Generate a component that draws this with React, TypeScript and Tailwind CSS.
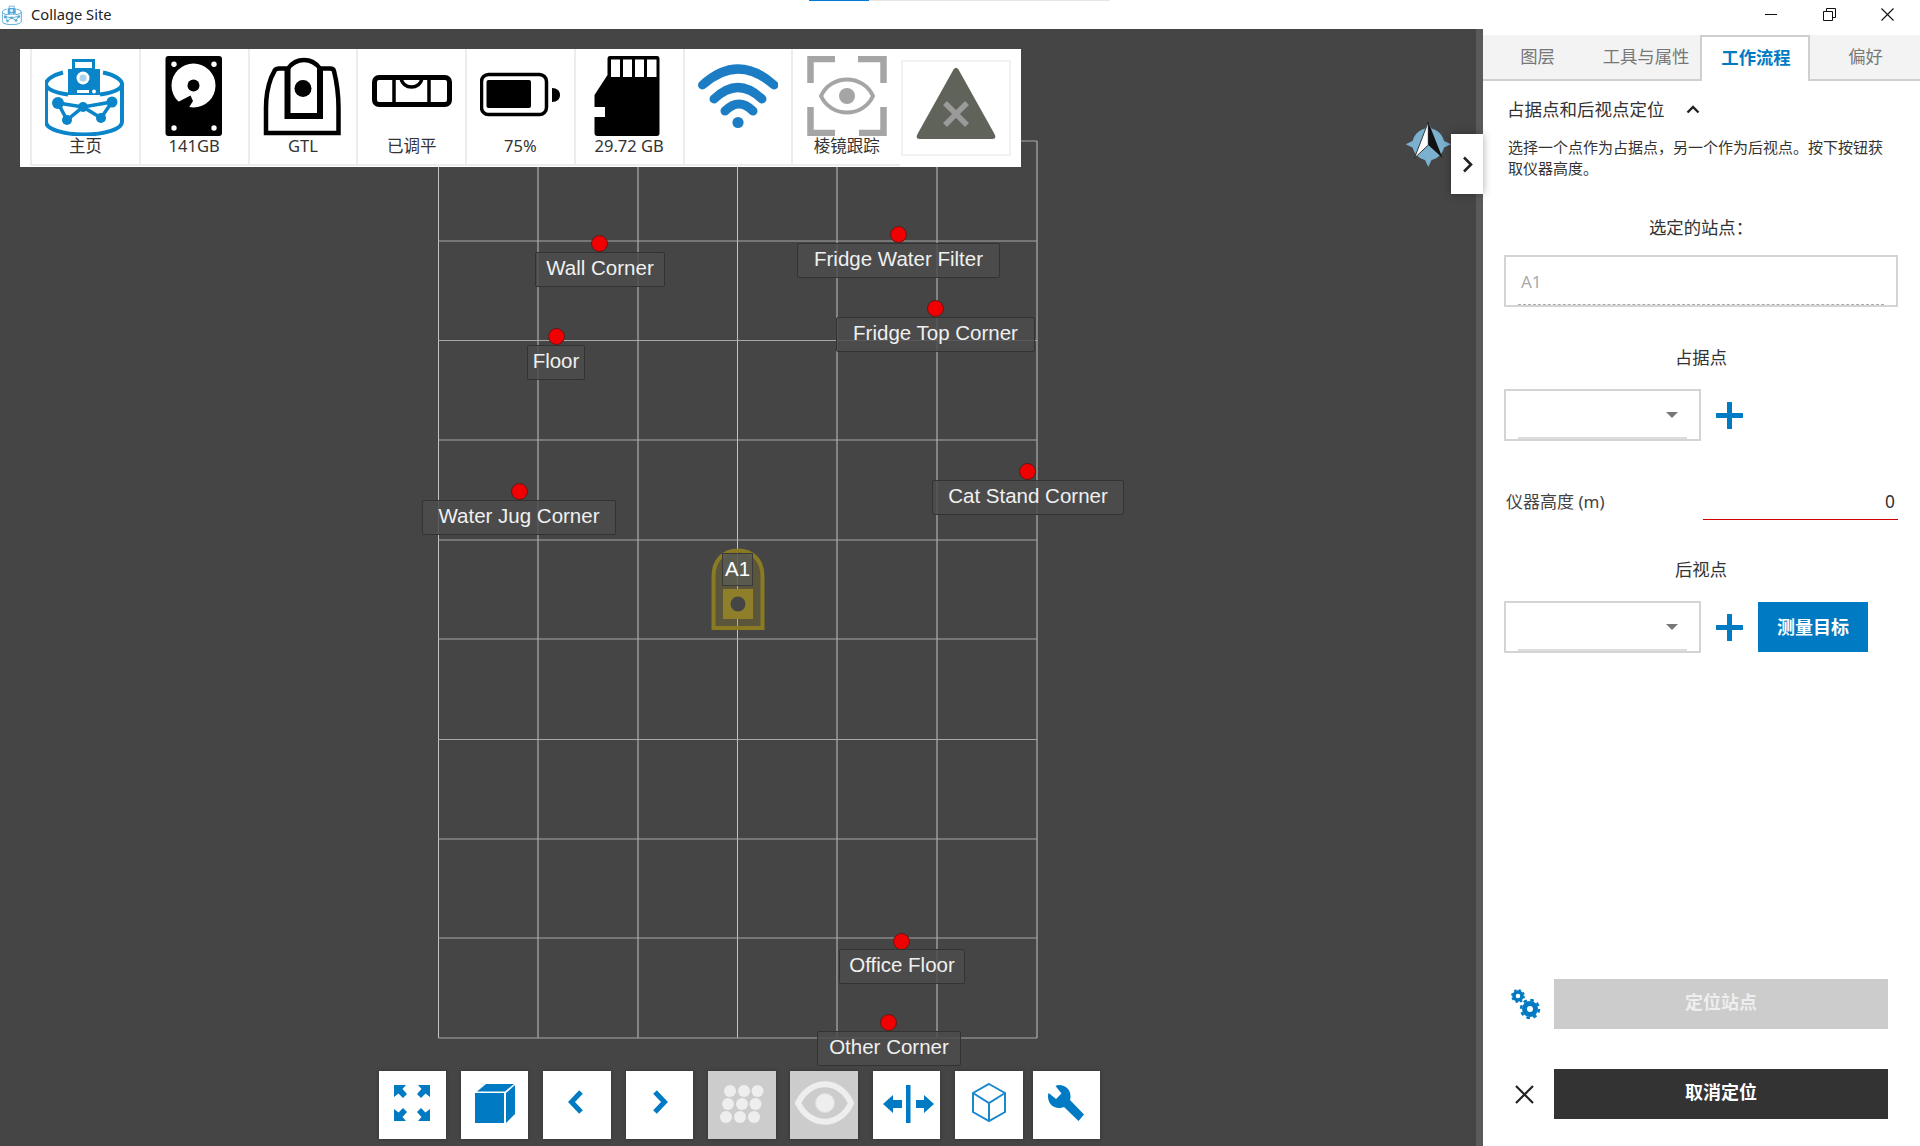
import React from 'react';

const BLUE = '#007ac3';

const gridX = [438.5, 538, 638, 737.5, 837, 937, 1037];
const gridY = [112, 212, 311.5, 411, 511, 610, 710.5, 810, 909, 1009];

const points = [
  { name: 'Wall Corner', dot: [599, 214], box: [535, 223, 130] },
  { name: 'Fridge Water Filter', dot: [898, 205], box: [797, 214, 203] },
  { name: 'Floor', dot: [556, 307], box: [527, 316, 58] },
  { name: 'Fridge Top Corner', dot: [935, 279], box: [836, 288, 199] },
  { name: 'Water Jug Corner', dot: [519, 462], box: [422, 471, 194] },
  { name: 'Cat Stand Corner', dot: [1027, 442], box: [932, 451, 192] },
  { name: 'Office Floor', dot: [901, 912], box: [839, 920, 126] },
  { name: 'Other Corner', dot: [888, 993], box: [817, 1002, 144] },
];

const HomeIcon = ({ size = 80 }: { size?: number }) => (
  <svg width={size} height={size} viewBox="0 0 80 80" fill="none">
    <g stroke="#0a85c9" strokeWidth="4">
      <path d="M1 66V28C1 24 8 19 18 16.5M77 66V28C77 24 70 19 58 16.5" />
      <path d="M1 28C1 33 10 37 23 38.5M77 28C77 33 68 37 55 38.5" />
      <path d="M1 66C1 73 18 78.5 39 78.5S77 73 77 66" />
    </g>
    <path d="M27 3H50V13H55V39H23V13H27Z" fill="#0a85c9" />
    <rect x="30" y="6" width="17" height="6" fill="#fff" />
    <circle cx="38" cy="22" r="6.5" fill="#fff" />
    <circle cx="38" cy="22" r="3.5" fill="#0a85c9" opacity="0.35" />
    <rect x="32" y="34" width="12" height="3" fill="#fff" />
    <circle cx="49" cy="35.5" r="2" fill="#fff" />
    <g stroke="#0a85c9" strokeWidth="3.5">
      <path d="M13 47L38 51L67 46L56 62L38 51L22 64L13 47" />
    </g>
    <g fill="#0a85c9">
      <circle cx="13" cy="47" r="6" />
      <circle cx="38" cy="51" r="5" />
      <circle cx="67" cy="46" r="5.5" />
      <circle cx="22" cy="64" r="5" />
      <circle cx="56" cy="62" r="5" />
    </g>
  </svg>
);

const DiskIcon = () => (
  <svg width="80" height="80" viewBox="0 0 80 80">
    <rect x="11.5" y="0" width="56.5" height="80" rx="3" fill="#000" />
    <g fill="#fff">
      <circle cx="20" cy="8.3" r="2.7" />
      <circle cx="60" cy="8.3" r="2.7" />
      <circle cx="20" cy="72" r="2.7" />
      <circle cx="60" cy="72" r="2.7" />
      <circle cx="39.5" cy="29.5" r="22" />
    </g>
    <circle cx="39.5" cy="29.5" r="6" fill="#000" />
    <path d="M24 46L36.5 39.5L39 45L34 53L27 53Z" fill="#000" />
  </svg>
);

const GtlIcon = () => (
  <svg width="80" height="80" viewBox="0 0 80 80" fill="none" stroke="#000">
    <path
      d="M3 77V52C3 42 5 30 8 22L12 14C13 12.5 14 12.5 16 12.5H25C29 7 34 4 41 4S53 7 57 12.5H67C69 12.5 70.5 13 71 15C74 27 75.5 40 75.5 52V77Z"
      strokeWidth="4.5"
    />
    <path d="M24.5 12V60H57V12" strokeWidth="6" />
    <circle cx="40" cy="32.5" r="8.5" fill="#000" stroke="none" />
  </svg>
);

const LevelIcon = () => (
  <svg width="80" height="80" viewBox="0 0 80 80" fill="none" stroke="#000">
    <rect x="2.5" y="21.5" width="75" height="27" rx="4.5" strokeWidth="5" />
    <path d="M22 20V50M57 20V50" strokeWidth="3.5" />
    <path d="M29 22C31 34 48 34 50 22" strokeWidth="3.5" />
  </svg>
);

const BatteryIcon = () => (
  <svg width="80" height="80" viewBox="0 0 80 80" fill="none">
    <rect x="1.5" y="18.5" width="65" height="40" rx="7" stroke="#000" strokeWidth="3.5" />
    <rect x="6.5" y="24" width="44.5" height="28" rx="2" fill="#000" />
    <path d="M72 32C77 32 80 35 80 39S77 46 72 46Z" fill="#000" />
  </svg>
);

const CardIcon = () => (
  <svg width="80" height="80" viewBox="0 0 80 80">
    <path
      d="M21 0H68Q70.5 0 70.5 3V77Q70.5 80 68 80H8.5Q5.5 80 5.5 77V61H16V51H5.5V39L18.5 19V3Q18.5 0 21 0Z"
      fill="#000"
    />
    <g fill="#fff">
      <rect x="22" y="3.5" width="9" height="17.5" />
      <rect x="34" y="3.5" width="9" height="17.5" />
      <rect x="46" y="3.5" width="9" height="17.5" />
      <rect x="58" y="3.5" width="9.5" height="17.5" />
    </g>
  </svg>
);

const WifiIcon = () => (
  <svg width="80" height="80" viewBox="0 0 80 80" fill="none" stroke="#1c7dc4" strokeLinecap="round">
    <path d="M4.5 29Q40 -3 76 29" strokeWidth="9" />
    <path d="M16 43Q40 20 64 43" strokeWidth="9" />
    <path d="M27 55Q41 41 55 55" strokeWidth="9" />
    <circle cx="40" cy="66.5" r="5.6" fill="#1c7dc4" stroke="none" />
  </svg>
);

const PrismIcon = () => (
  <svg width="80" height="80" viewBox="0 0 80 80" fill="none" stroke="#a5a5a5">
    <path d="M3.5 27V3H28M51 3H76.5V27M3.5 51V77H28M52 77H76.5V51" strokeWidth="6.5" />
    <path d="M14 40C24 18 56 18 66 40C56 62 24 62 14 40Z" strokeWidth="4" />
    <circle cx="40" cy="40" r="8" fill="#a5a5a5" stroke="none" />
  </svg>
);

const WarningIcon = () => (
  <svg width="80" height="74" viewBox="0 0 80 74">
    <path d="M37.5 2.5Q40 -1 42.5 2.5L78.5 67Q81 72 76 72H4Q-1 72 1.5 67Z" fill="#5f635a" />
    <path d="M29 36L51 58M51 36L29 58" stroke="#9a9a9a" strokeWidth="5.5" />
  </svg>
);

const statusItems = [
  { label: '主页', icon: <HomeIcon /> },
  { label: '141GB', icon: <DiskIcon /> },
  { label: 'GTL', icon: <GtlIcon /> },
  { label: '已调平', icon: <LevelIcon /> },
  { label: '75%', icon: <BatteryIcon /> },
  { label: '29.72 GB', icon: <CardIcon /> },
  { label: '', icon: <WifiIcon /> },
  { label: '棱镜跟踪', icon: <PrismIcon /> },
];

const ToolSvg = ({ children }: { children: React.ReactNode }) => (
  <svg width="67" height="68" viewBox="0 0 67 68">
    {children}
  </svg>
);

const bottomTools = [
  {
    cls: 'w-[67px] mr-[15px]',
    icon: (
      <ToolSvg>
        <g fill={BLUE}>
          <path d="M15 14H27L23.5 18L28 23L24 27L19.5 22.5L15 26Z" />
          <path d="M51 14H39L42.5 18L38 23L42 27L46.5 22.5L51 26Z" />
          <path d="M15 50H27L23.5 46L28 41L24 37L19.5 41.5L15 38Z" />
          <path d="M51 50H39L42.5 46L38 41L42 37L46.5 41.5L51 38Z" />
        </g>
      </ToolSvg>
    ),
  },
  {
    cls: 'w-[67px] mr-[15px]',
    icon: (
      <ToolSvg>
        <g fill={BLUE}>
          <rect x="14" y="22" width="29" height="30" />
          <path d="M16 20.5L25 13H53L44 20.5Z" />
          <path d="M45 22L54 14V43L45 52Z" />
        </g>
      </ToolSvg>
    ),
  },
  {
    cls: 'w-[68px] mr-[15px]',
    icon: (
      <ToolSvg>
        <path d="M38 21L28.5 31L38 41" fill="none" stroke={BLUE} strokeWidth="5" />
      </ToolSvg>
    ),
  },
  {
    cls: 'w-[67px] mr-[15px]',
    icon: (
      <ToolSvg>
        <path d="M29 21L38.5 31L29 41" fill="none" stroke={BLUE} strokeWidth="5" />
      </ToolSvg>
    ),
  },
  {
    cls: 'w-[68px] mr-[14px]',
    off: true,
    icon: (
      <ToolSvg>
        <g fill="#eeeeee">
          <circle cx="22" cy="20" r="6" />
          <circle cx="36" cy="20" r="6" />
          <circle cx="49.5" cy="20" r="6" />
          <circle cx="20" cy="33" r="6" />
          <circle cx="34" cy="33" r="6" />
          <circle cx="47.5" cy="33" r="6" />
          <circle cx="18" cy="46" r="6" />
          <circle cx="32" cy="46" r="6" />
          <circle cx="46" cy="46" r="6" />
        </g>
      </ToolSvg>
    ),
  },
  {
    cls: 'w-[68px] mr-[15px]',
    off: true,
    icon: (
      <ToolSvg>
        <path d="M8 32C20 7 50 7 61 32C50 57 20 57 8 32Z" fill="none" stroke="#eeeeee" strokeWidth="6" />
        <circle cx="35" cy="32" r="9.5" fill="#eeeeee" stroke="#dddddd" />
      </ToolSvg>
    ),
  },
  {
    cls: 'w-[67px] mr-[15px]',
    icon: (
      <ToolSvg>
        <g fill={BLUE}>
          <rect x="33" y="14" width="4.5" height="38" />
          <path d="M10 33L20 24V29H29V37H20V42Z" />
          <path d="M61 33L51 24V29H43V37H51V42Z" />
        </g>
      </ToolSvg>
    ),
  },
  {
    cls: 'w-[68px] mr-[10px]',
    icon: (
      <ToolSvg>
        <path
          d="M34 13L50 22V41L34 50L18 41V22ZM18 22L34 32L50 22M34 32V50"
          fill="none"
          stroke="#1a88cc"
          strokeWidth="2"
        />
      </ToolSvg>
    ),
  },
  {
    cls: 'w-[67px]',
    icon: (
      <ToolSvg>
        <path
          d="M26 14C33 14 38 19 37.5 26C37.5 27 37.3 28 37 29L51 43.5L45.5 50L31 36C29 36.8 27.5 37 26 37C19.5 37 15 32 15 25.5C15 24 15.2 23 15.7 22L23 28L28.5 22.5L22.5 15C23.5 14.4 24.7 14 26 14Z"
          fill={BLUE}
        />
      </ToolSvg>
    ),
  },
];

const tabs = ['图层', '工具与属性', '工作流程', '偏好'];

const Dropdown = () => (
  <div className="w-[197px] h-[52px] border-2 border-[#d4d4d4] px-[12px]">
    <div className="h-full border-b-2 border-[#dddddd] flex items-center justify-end pr-[9px] pt-[2px]">
      <div className="w-0 h-0 border-x-[6px] border-x-transparent border-t-[6px] border-t-[#777777]" />
    </div>
  </div>
);

const Plus = () => (
  <svg width="27" height="27" viewBox="0 0 27 27" className="ml-[15px]">
    <path d="M13.5 1V26M1 13.5H26" stroke={BLUE} strokeWidth="5" strokeLinecap="round" />
  </svg>
);

const FieldLabel = ({ className, children }: { className: string; children: React.ReactNode }) => (
  <div className={`h-6 leading-6 text-center text-[17.33px] text-[#333333] ${className}`}>{children}</div>
);

export default function App() {
  return (
    <div className="relative w-[1920px] h-[1146px] overflow-hidden bg-white flex flex-col font-['Noto_Sans','Noto_Sans_CJK_SC',sans-serif]">
      {/* title bar */}
      <div className="h-[29px] shrink-0 flex items-center">
        <div className="ml-[2px] mr-[9px] opacity-70">
          <HomeIcon size={20} />
        </div>
        <span className="text-[14.7px] text-[#222222]">Collage Site</span>
        <div className="ml-auto mr-[3px] flex">
          <div className="w-[58px] h-[29px] flex items-center justify-center">
            <div className="w-[12px] h-px bg-[#111111]" />
          </div>
          <div className="w-[58px] h-[29px] flex items-center justify-center">
            <svg width="13" height="13" viewBox="0 0 13 13" fill="none" stroke="#111111">
              <path d="M.5 3.5H9.5V12.5H.5ZM3.5 3.5V.5H12.5V9.5H9.5" />
            </svg>
          </div>
          <div className="w-[59px] h-[29px] flex items-center justify-center">
            <svg width="13" height="13" viewBox="0 0 13 13" stroke="#111111" strokeWidth="1.1">
              <path d="M.5 .5L12.5 12.5M12.5 .5L.5 12.5" />
            </svg>
          </div>
        </div>
      </div>
      <div className="absolute left-[809px] top-0 w-[60px] h-px bg-[#0078d7]" />
      <div className="absolute left-[869px] top-0 w-[241px] h-px bg-[#e6e6e6]" />

      <div className="flex-1 flex min-h-0">
        {/* map canvas */}
        <div className="relative w-[1483px] bg-[#454545] border-r-[7px] border-[#5a5a5a] flex flex-col">
          <svg className="absolute left-0 top-0" width="1476" height="1117">
            {gridX.map((x) => (
              <line key={x} x1={x} x2={x} y1={gridY[0]} y2={gridY[9]} stroke="#c4c4c4" strokeWidth="1" />
            ))}
            {gridY.map((y) => (
              <line key={y} x1={gridX[0]} x2={gridX[6]} y1={y} y2={y} stroke="#a8a8a8" strokeWidth="1.2" />
            ))}
          </svg>

          {points.map((p) => (
            <React.Fragment key={p.name}>
              <div
                className="absolute w-[17px] h-[17px] rounded-full bg-[#f00000] border border-[#5a1a1a]"
                style={{ left: p.dot[0] - 8.5, top: p.dot[1] - 8.5 }}
              />
              <div
                className="absolute h-[35px] pb-[2px] flex items-center justify-center border border-[#333333] rounded-[2px] bg-[#4c4c4c]/85 text-[20.5px] text-[#f0f0f0] font-['Liberation_Sans',sans-serif]"
                style={{ left: p.box[0], top: p.box[1], width: p.box[2] }}
              >
                {p.name}
              </div>
            </React.Fragment>
          ))}

          {/* station marker */}
          <svg className="absolute left-[711px] top-[519px]" width="54" height="83" viewBox="0 0 54 83" fill="none">
            <path d="M2.5 80V28C2.5 12 13 2.5 27 2.5S51.5 12 51.5 28V80Z" fill="#8a7a24" fillOpacity="0.3" stroke="#8a7a24" strokeWidth="4" />
            <rect x="12" y="41" width="30" height="30" fill="#8f7f2a" />
            <circle cx="27" cy="56" r="7.5" fill="#454545" />
          </svg>
          <div className="absolute left-[722px] top-[524px] w-[31px] h-[33px] flex items-center justify-center border border-[#3a3a3a] bg-[#5c5c54]/85 text-[20.5px] text-white font-['Liberation_Sans',sans-serif]">
            A1
          </div>

          {/* compass */}
          <svg className="absolute left-[1400px] top-[86px]" width="60" height="60" viewBox="0 0 60 60">
            <g fill="#7bb0cf">
              <circle cx="28.3" cy="29.3" r="16" />
              <path d="M28.3 6.7L32 15H24.5Z" />
              <path d="M51 29.3L43 25.5V33Z" />
              <path d="M28.3 52L32 44H24.5Z" />
              <path d="M5.7 29.3L13.5 25.5V33Z" />
            </g>
            <path d="M28.3 7L14.5 43L28.3 30Z" fill="#ffffff" stroke="#111111" strokeWidth="0.8" />
            <path d="M28.3 7L42.5 43L28.3 30Z" fill="#111111" />
          </svg>

          {/* collapse handle */}
          <div className="absolute right-[-7px] top-[105px] w-[32px] h-[60px] bg-white shadow-[0_0_8px_rgba(0,0,0,0.35)] flex items-center justify-center">
            <svg width="11" height="17" viewBox="0 0 11 17" fill="none" stroke="#222222" strokeWidth="2.6">
              <path d="M2 1.5L9 8.5L2 15.5" />
            </svg>
          </div>

          {/* status strip */}
          <div className="relative ml-[20px] mt-[20px] w-[1001px] h-[118px] bg-white pl-[10px] flex items-start">
            {statusItems.map((item, i) => (
              <div
                key={i}
                className="w-[108.75px] h-[117px] border-l-2 border-b-2 border-[#ececec] pt-[7px] flex flex-col items-center"
              >
                {item.icon}
                <span className="h-[20px] leading-[20px] text-[16.5px] text-[#333333] whitespace-nowrap">{item.label}</span>
              </div>
            ))}
            <div className="w-[110px] h-[96px] ml-px mt-[11px] border-2 border-[#f1f1f1] pt-[5px] flex justify-center">
              <WarningIcon />
            </div>
          </div>

          {/* bottom tools */}
          <div className="relative mt-auto mb-[7px] ml-[379px] flex">
            {bottomTools.map((tool, i) => (
              <div
                key={i}
                className={`h-[68px] shadow-[0_0_4px_rgba(0,0,0,0.25)] ${tool.cls} ${tool.off ? 'bg-[#cccccc]' : 'bg-white'}`}
              >
                {tool.icon}
              </div>
            ))}
          </div>
        </div>

        {/* side panel */}
        <div className="flex-1 flex flex-col">
          <div className="mt-[6px] h-[46px] shrink-0 grid grid-cols-[108px_109px_110px_110px] bg-[#f3f3f3] border-b-2 border-[#cfcfcf]">
            {tabs.map((t, i) => (
              <div
                key={t}
                className={
                  i === 2
                    ? 'h-[46px] pb-[2px] pl-[2px] flex items-center justify-center bg-white border-2 border-b-0 border-[#cfcfcf] text-[17.33px] font-bold text-[#007ac3]'
                    : 'h-[44px] pl-px flex items-center justify-center text-[17.33px] text-[#777777]'
                }
              >
                {t}
              </div>
            ))}
          </div>

          <div className="flex-1 flex flex-col pl-[21px] pr-[22px] pb-[27px]">
            <div className="mt-[16px] pl-[3px] h-6 flex items-center text-[17.5px] text-[#333333]">
              占据点和后视点定位
              <svg width="14" height="9" viewBox="0 0 14 9" fill="none" stroke="#222222" strokeWidth="2.4" className="ml-[21px]">
                <path d="M1.5 7.5L7 2L12.5 7.5" />
              </svg>
            </div>
            <p className="mt-[16px] pl-[4px] text-[15px] leading-[21px] text-[#333333] whitespace-nowrap">
              选择一个点作为占据点，另一个作为后视点。按下按钮获
              <br />
              取仪器高度。
            </p>

            <FieldLabel className="mt-[36px]">选定的站点：</FieldLabel>
            <div className="mt-[16px] h-[52px] border-2 border-[#d4d4d4] px-[12px]">
              <div className="h-full border-b border-dashed border-[#aaaaaa] flex items-center pl-[3px] pt-[2px] text-[17px] text-[#aaaaaa]">
                A1
              </div>
            </div>

            <FieldLabel className="mt-[38px]">占据点</FieldLabel>
            <div className="mt-[20px] flex items-center">
              <Dropdown />
              <Plus />
            </div>

            <div className="mt-[43px] h-[36px] flex items-center justify-between">
              <span className="ml-[2px] text-[17px] text-[#444444]">仪器高度 (m)</span>
              <div className="w-[195px] h-[36px] border-b border-[#d00000] flex items-center justify-end pr-[3px] text-[17.33px] text-[#333333]">
                0
              </div>
            </div>

            <FieldLabel className="mt-[37px]">后视点</FieldLabel>
            <div className="mt-[20px] flex items-center">
              <Dropdown />
              <Plus />
              <button className="ml-[15px] w-[110px] h-[50px] pt-px bg-[#007ac3] text-white text-[18px] font-bold">测量目标</button>
            </div>

            <div className="mt-auto flex items-center">
              <div className="w-[42px] mr-[8px] flex justify-center">
                <svg width="32" height="32" viewBox="0 0 32 32" fill="none" stroke={BLUE}>
                  <circle cx="9" cy="8" r="4" strokeWidth="3.5" />
                  <circle cx="9" cy="8" r="6" strokeWidth="1.8" strokeDasharray="2.4 2.3" />
                  <circle cx="21" cy="21" r="5.5" strokeWidth="5" />
                  <circle cx="21" cy="21" r="9" strokeWidth="2.4" strokeDasharray="3.6 3.47" />
                </svg>
              </div>
              <button className="w-[334px] h-[50px] pb-[3px] bg-[#cccccc] text-[#eeeeee] text-[18px] font-bold">定位站点</button>
            </div>
            <div className="mt-[40px] flex items-center">
              <div className="w-[40px] mr-[10px] flex justify-center">
                <svg width="19" height="19" viewBox="0 0 19 19" stroke="#222222" strokeWidth="2.2">
                  <path d="M1 1L18 18M18 1L1 18" />
                </svg>
              </div>
              <button className="w-[334px] h-[50px] pb-[3px] bg-[#333333] text-white text-[18px] font-bold">取消定位</button>
            </div>
          </div>
        </div>
      </div>
    </div>
  );
}
